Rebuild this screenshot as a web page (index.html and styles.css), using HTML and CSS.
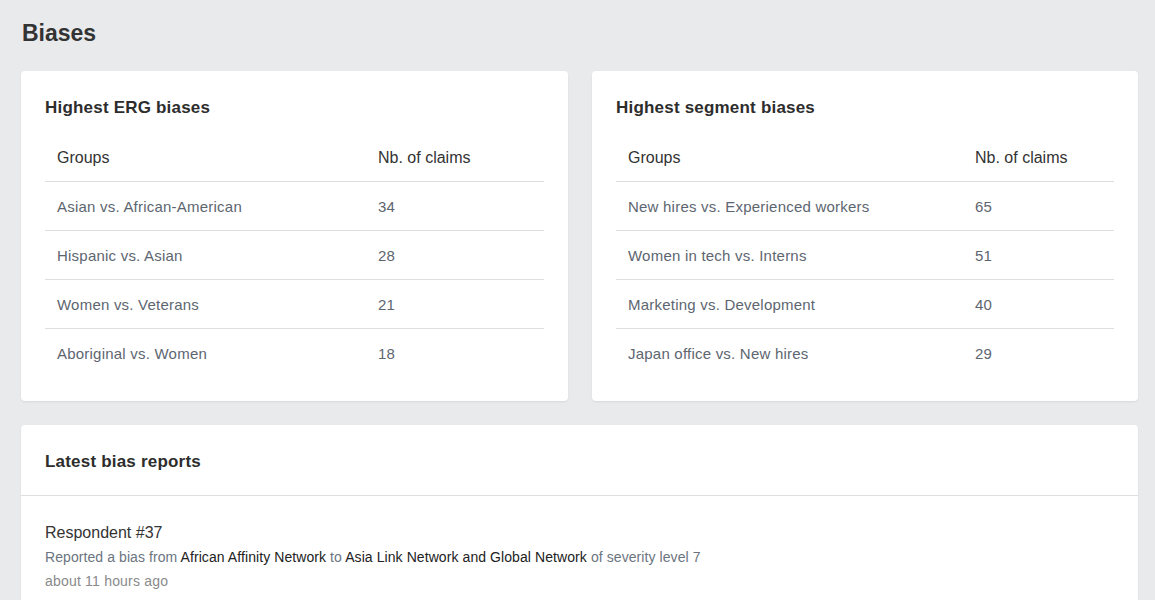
FILE: index.html
```html
<!DOCTYPE html>
<html>
<head>
<meta charset="utf-8">
<link rel="stylesheet" href="styles.css">
</head>
<body>
<div class="page">
  <h1 class="title">Biases</h1>
  <div class="grid">
    <section class="card pad">
      <h2 class="card-title">Highest ERG biases</h2>
      <table class="tbl">
        <colgroup><col class="c1-left"><col></colgroup>
        <thead><tr><th>Groups</th><th>Nb. of claims</th></tr></thead>
        <tbody>
          <tr><td>Asian vs. African-American</td><td>34</td></tr>
          <tr><td>Hispanic vs. Asian</td><td>28</td></tr>
          <tr><td>Women vs. Veterans</td><td>21</td></tr>
          <tr><td>Aboriginal vs. Women</td><td>18</td></tr>
        </tbody>
      </table>
    </section>
    <section class="card pad">
      <h2 class="card-title">Highest segment biases</h2>
      <table class="tbl">
        <colgroup><col class="c1-right"><col></colgroup>
        <thead><tr><th>Groups</th><th>Nb. of claims</th></tr></thead>
        <tbody>
          <tr><td>New hires vs. Experienced workers</td><td>65</td></tr>
          <tr><td>Women in tech vs. Interns</td><td>51</td></tr>
          <tr><td>Marketing vs. Development</td><td>40</td></tr>
          <tr><td>Japan office vs. New hires</td><td>29</td></tr>
        </tbody>
      </table>
    </section>
  </div>
  <section class="card reports">
    <div class="reports-head"><h2 class="card-title">Latest bias reports</h2></div>
    <div class="reports-body">
      <div class="report">
        <div class="respondent">Respondent #37</div>
        <div class="desc">Reported a bias from <span class="strong">African Affinity Network</span> to <span class="strong">Asia Link Network and Global Network</span> of severity level 7</div>
        <div class="time">about 11 hours ago</div>
      </div>
    </div>
  </section>
</div>
</body>
</html>
```
FILE: styles.css
```css
html, body {
  margin: 0;
  padding: 0;
  background: #e9eaec;
  font-family: "Liberation Sans", Arial, sans-serif;
  color: #333;
  overflow: hidden;
}
.page {
  padding: 15px 17px 0 21px;
}
.title {
  margin: 0 0 20px 1px;
  font-size: 23px;
  line-height: 36px;
  font-weight: bold;
  color: #333;
}
.grid {
  display: grid;
  grid-template-columns: 547px 546px;
  column-gap: 24px;
  margin-bottom: 24px;
}
.card {
  background: #fff;
  border-radius: 4px;
  box-shadow: 0 1px 2px rgba(0,0,0,0.08);
}
.pad {
  padding: 25px 24px 24px;
}
.card-title {
  margin: 0;
  font-size: 17px;
  line-height: 24px;
  font-weight: bold;
  color: #2d2d2d;
  letter-spacing: 0.2px;
}
.pad .card-title {
  margin-bottom: 13px;
}
.tbl {
  width: 100%;
  border-collapse: collapse;
  table-layout: fixed;
  font-size: 15px;
}
.c1-left { width: 321px; }
.c1-right { width: 347px; }
.tbl th {
  text-align: left;
  font-weight: normal;
  font-size: 16px;
  color: #333;
  padding: 13px 12px 11px;
  line-height: 24px;
  border-bottom: 1px solid #dedede;
}
.tbl td {
  padding: 13px 12px 11px;
  line-height: 24px;
  color: #5d6670;
  letter-spacing: 0.22px;
  border-bottom: 1px solid #dedede;
}
.tbl tbody tr:last-child td {
  border-bottom: none;
}
.reports-head {
  padding: 26px 24px 22px;
  border-bottom: 1px solid #dedede;
}
.reports-head .card-title {
  line-height: 22px;
}
.reports-body {
  padding: 25px 24px 24px;
}
.respondent {
  font-size: 16px;
  line-height: 24px;
  color: #333;
}
.desc {
  font-size: 14px;
  line-height: 24px;
  color: #6b7480;
  letter-spacing: 0.08px;
}
.strong {
  color: #222;
}
.time {
  font-size: 14px;
  line-height: 24px;
  color: #8a8a8a;
  letter-spacing: 0.2px;
}
```
